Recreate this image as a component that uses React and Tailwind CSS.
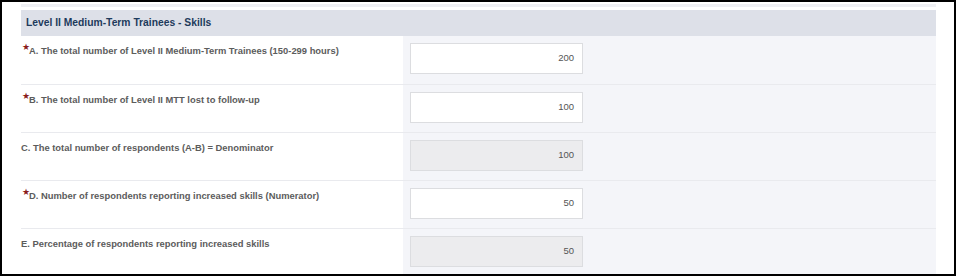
import React from 'react';

const rows = [
  { label: 'A. The total number of Level II Medium-Term Trainees (150-299 hours)', value: '200', required: true },
  { label: 'B. The total number of Level II MTT lost to follow-up', value: '100', required: true },
  { label: 'C. The total number of respondents (A-B) = Denominator', value: '100', disabled: true },
  { label: 'D. Number of respondents reporting increased skills (Numerator)', value: '50', required: true },
  { label: 'E. Percentage of respondents reporting increased skills', value: '50', disabled: true },
];

function Row({ row, first }) {
  return (
    <div className={'flex h-[48px] ' + (first ? '' : 'border-t border-[#e9eaee]')}>
      <div className="w-[382px] pt-[9px] flex items-start">
        {row.required && (
          <span className="text-[#8b1c1c] text-[9px] leading-[9px] w-[8px] mt-[-2px] pl-[1px]">★</span>
        )}
        <span className="text-[9.4px] leading-[11px] font-bold text-[#5c5c5c]">{row.label}</span>
      </div>
      <div className="flex-1 bg-[#f4f5f9] pl-[7px] pt-[7px]">
        <div
          className={
            'w-[173px] h-[31px] border border-[#dcdde0] flex items-center justify-end pr-[8px] text-[9.5px] text-[#555] ' +
            (row.disabled ? 'bg-[#ececee]' : 'bg-white')
          }
        >
          {row.value}
        </div>
      </div>
    </div>
  );
}

export default function App() {
  return (
    <div className="w-[958px] h-[277px] bg-white" style={{ fontFamily: '"Liberation Sans", Arial, sans-serif' }}>
      <div className="w-[956px] h-[276px] border-2 border-black overflow-hidden pl-[19px] pr-[18px] pt-[2px]">
        <div className="h-[3px] bg-[#eff0f4]"></div>
        <div className="h-[3px]"></div>
        <div className="h-[26px] bg-[#dde0e8] flex items-center pl-[5px] text-[10.3px] font-bold text-[#1e3b5c]">
          Level II Medium-Term Trainees - Skills
        </div>
        {rows.map((row, i) => (
          <Row key={i} row={row} first={i === 0} />
        ))}
      </div>
    </div>
  );
}
